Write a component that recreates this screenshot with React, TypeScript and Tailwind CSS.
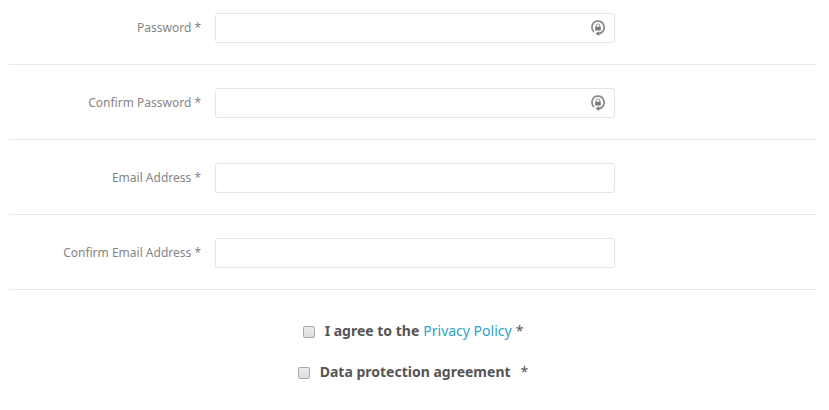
import { useState } from "react";

interface FieldProps {
    id: string;
    label: string;
    type: "password" | "email";
}

const fields: FieldProps[] = [
    { id: "password", label: "Password", type: "password" },
    { id: "confirm-password", label: "Confirm Password", type: "password" },
    { id: "email", label: "Email Address", type: "email" },
    { id: "confirm-email", label: "Confirm Email Address", type: "email" },
];

function LockIcon() {
    return (
        <svg width="14" height="16" viewBox="0 0 14 16" fill="none" aria-hidden="true">
            <path d="M3 12C-0.6 8.4 0.8 1.2 7 1.2S14.8 8.8 11.2 12Q10 13.2 8 13.6" stroke="#8c8c8c" strokeWidth="1.8" />
            <path d="M8.2 11.2V16L4.4 13.6Z" fill="#808080" />
            <path d="M5.2 7.4V5.8a1.8 1.8 0 0 1 3.6 0V7.4" stroke="#a5a5a5" strokeWidth="1.2" />
            <rect x="4.2" y="6.8" width="5.6" height="3.8" rx="0.4" fill="#7a7a7a" />
        </svg>
    );
}

function Field({ id, label, type }: FieldProps) {
    const [value, setValue] = useState("");

    return (
        <div className="flex items-center border-b border-[#e9e9e9] pt-[23px] pb-[21px] first:pt-[13px]">
            <label htmlFor={id} className="w-48 shrink-0 text-right text-xs text-[#858585]">
                {label} *
            </label>
            <div className="relative ml-3.5 w-full max-w-[400px]">
                <input
                    id={id}
                    type={type}
                    value={value}
                    onChange={(e) => setValue(e.target.value)}
                    className="block h-[30px] w-full rounded-[3px] border border-[#e5e5e5] bg-white pr-8 pl-2 text-xs text-[#555] outline-none focus:border-[#bbb]"
                />
                {type === "password" && (
                    <span className="pointer-events-none absolute inset-y-0 right-2.5 flex items-center">
                        <LockIcon />
                    </span>
                )}
            </div>
        </div>
    );
}

const checkboxStyle =
    "mt-0.5 size-3 shrink-0 appearance-none rounded-[2px] border border-[#a9a9a9] bg-linear-to-b from-[#ededed] to-[#dcdcdc] checked:from-[#2fa3c7] checked:to-[#2fa3c7]";

export default function App() {
    return (
        <form className="bg-white pr-3 pl-[9px] font-['Noto_Sans',sans-serif]">
            <div>
                {fields.map((field) => (
                    <Field key={field.id} {...field} />
                ))}
            </div>

            {/* Agreements */}
            <div className="flex flex-col items-center gap-[21px] pt-[31px] text-sm text-[#555]">
                <div className="flex items-center">
                    <input id="privacy" type="checkbox" className={checkboxStyle} />
                    <label htmlFor="privacy" className="ml-2.5 font-bold">I agree to the</label>
                    <a href="#privacy-policy" className="ml-1 text-[#2fa3c7]">Privacy Policy</a>
                    <span className="ml-1">*</span>
                </div>
                <div className="flex items-center">
                    <input id="data-protection" type="checkbox" className={checkboxStyle} />
                    <label htmlFor="data-protection" className="ml-2.5 font-bold">Data protection agreement</label>
                    <span className="ml-2.5">*</span>
                </div>
            </div>
        </form>
    );
}
